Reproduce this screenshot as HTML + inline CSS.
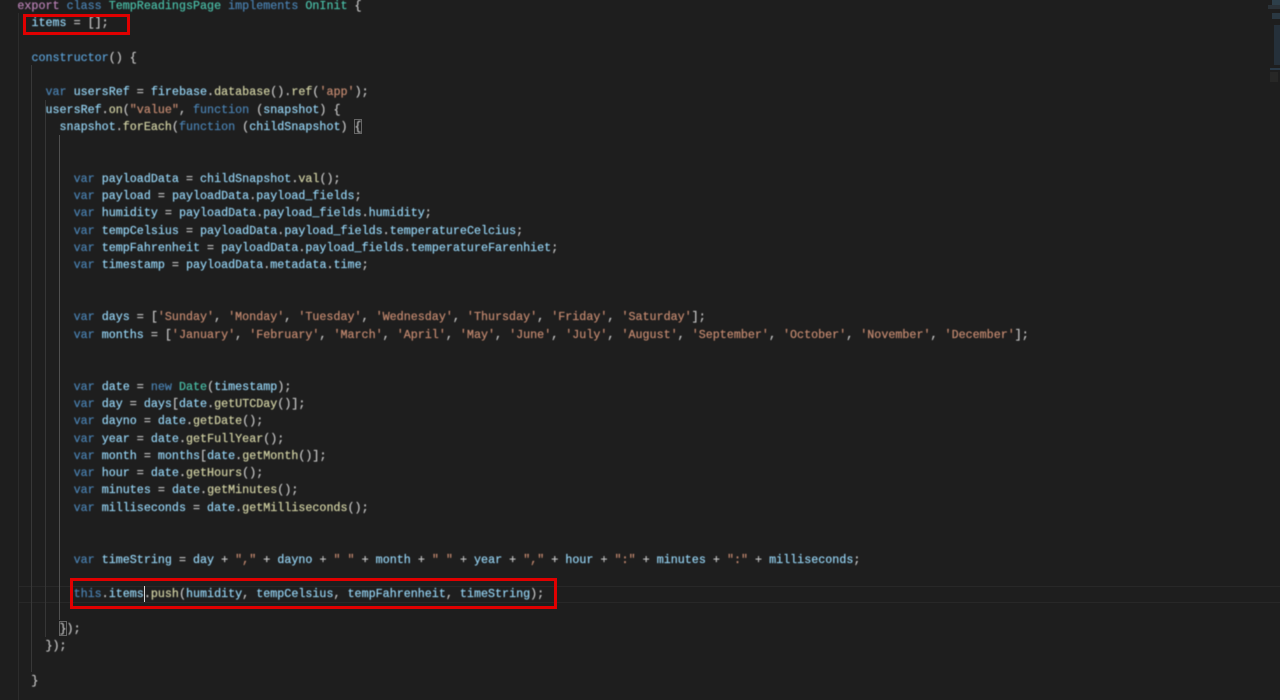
<!DOCTYPE html>
<html>
<head>
<meta charset="utf-8">
<style>
html,body{margin:0;padding:0;background:#1e1e1e;width:1280px;height:700px;overflow:hidden}
#code{position:absolute;left:17.4px;top:-2.3px;margin:0;font-family:"Liberation Mono",monospace;font-size:11.71px;line-height:17.31px;color:#c8c8c8;white-space:pre;filter:blur(.4px);-webkit-text-stroke:.2px}
.k{color:#4a82b2}.v{color:#94d2f2}.f{color:#d2d2a4}.s{color:#c48a70}.c{color:#4abfa8}.e{color:#b880b4}
.g{position:absolute;width:1px}
.r{position:absolute;border:3px solid #e00000;box-sizing:border-box}
.b{position:absolute;border:1px solid #666;box-sizing:border-box;width:8px;height:15px}
.m{position:absolute}
</style>
</head>
<body>
<div style="position:absolute;left:18px;top:586px;width:1262px;height:17px;border-top:1px solid #282828;border-bottom:1px solid #282828;box-sizing:border-box"></div>
<div class="g" style="left:18px;top:13px;height:687px;background:#2c2c2c"></div>
<div class="g" style="left:31px;top:65px;height:607px;background:#383838"></div>
<div class="g" style="left:45px;top:100px;height:537px;background:#363636"></div>
<div class="g" style="left:59px;top:135px;height:485px;background:#505050"></div>
<pre id="code"><span class="e">export</span> <span class="k">class</span> <span class="c">TempReadingsPage</span> <span class="k">implements</span> <span class="c">OnInit</span> {
  <span class="v">items</span> = [];

  <span class="f" style="color:#5a9fd4">constructor</span>() {

    <span class="k">var</span> <span class="v">usersRef</span> = <span class="v">firebase</span>.<span class="f">database</span>().<span class="f">ref</span>(<span class="s">'app'</span>);
    <span class="v">usersRef</span>.<span class="f">on</span>(<span class="s">"value"</span>, <span class="k">function</span> (<span class="v">snapshot</span>) {
      <span class="v">snapshot</span>.<span class="f">forEach</span>(<span class="k">function</span> (<span class="v">childSnapshot</span>) {


        <span class="k">var</span> <span class="v">payloadData</span> = <span class="v">childSnapshot</span>.<span class="f">val</span>();
        <span class="k">var</span> <span class="v">payload</span> = <span class="v">payloadData</span>.<span class="v">payload_fields</span>;
        <span class="k">var</span> <span class="v">humidity</span> = <span class="v">payloadData</span>.<span class="v">payload_fields</span>.<span class="v">humidity</span>;
        <span class="k">var</span> <span class="v">tempCelsius</span> = <span class="v">payloadData</span>.<span class="v">payload_fields</span>.<span class="v">temperatureCelcius</span>;
        <span class="k">var</span> <span class="v">tempFahrenheit</span> = <span class="v">payloadData</span>.<span class="v">payload_fields</span>.<span class="v">temperatureFarenhiet</span>;
        <span class="k">var</span> <span class="v">timestamp</span> = <span class="v">payloadData</span>.<span class="v">metadata</span>.<span class="v">time</span>;


        <span class="k">var</span> <span class="v">days</span> = [<span class="s">'Sunday'</span>, <span class="s">'Monday'</span>, <span class="s">'Tuesday'</span>, <span class="s">'Wednesday'</span>, <span class="s">'Thursday'</span>, <span class="s">'Friday'</span>, <span class="s">'Saturday'</span>];
        <span class="k">var</span> <span class="v">months</span> = [<span class="s">'January'</span>, <span class="s">'February'</span>, <span class="s">'March'</span>, <span class="s">'April'</span>, <span class="s">'May'</span>, <span class="s">'June'</span>, <span class="s">'July'</span>, <span class="s">'August'</span>, <span class="s">'September'</span>, <span class="s">'October'</span>, <span class="s">'November'</span>, <span class="s">'December'</span>];


        <span class="k">var</span> <span class="v">date</span> = <span class="k">new</span> <span class="c">Date</span>(<span class="v">timestamp</span>);
        <span class="k">var</span> <span class="v">day</span> = <span class="v">days</span>[<span class="v">date</span>.<span class="f">getUTCDay</span>()];
        <span class="k">var</span> <span class="v">dayno</span> = <span class="v">date</span>.<span class="f">getDate</span>();
        <span class="k">var</span> <span class="v">year</span> = <span class="v">date</span>.<span class="f">getFullYear</span>();
        <span class="k">var</span> <span class="v">month</span> = <span class="v">months</span>[<span class="v">date</span>.<span class="f">getMonth</span>()];
        <span class="k">var</span> <span class="v">hour</span> = <span class="v">date</span>.<span class="f">getHours</span>();
        <span class="k">var</span> <span class="v">minutes</span> = <span class="v">date</span>.<span class="f">getMinutes</span>();
        <span class="k">var</span> <span class="v">milliseconds</span> = <span class="v">date</span>.<span class="f">getMilliseconds</span>();


        <span class="k">var</span> <span class="v">timeString</span> = <span class="v">day</span> + <span class="s">","</span> + <span class="v">dayno</span> + <span class="s">" "</span> + <span class="v">month</span> + <span class="s">" "</span> + <span class="v">year</span> + <span class="s">","</span> + <span class="v">hour</span> + <span class="s">":"</span> + <span class="v">minutes</span> + <span class="s">":"</span> + <span class="v">milliseconds</span>;

        <span class="k">this</span>.<span class="v">items</span>.<span class="f">push</span>(<span class="v">humidity</span>, <span class="v">tempCelsius</span>, <span class="v">tempFahrenheit</span>, <span class="v">timeString</span>);

      });
    });

  }</pre>
<div class="b" style="left:354px;top:119px"></div>
<div class="b" style="left:59px;top:621px"></div>
<div style="position:absolute;left:144px;top:586px;width:1px;height:16px;background:#d4d4d4"></div>
<div class="r" style="left:23px;top:14px;width:107px;height:21px"></div>
<div class="r" style="left:70px;top:578px;width:487px;height:31px"></div>
<div class="m" style="left:1272px;top:0;width:8px;height:8px;background:#2d3f4a"></div>
<div class="m" style="left:1268px;top:5px;width:12px;height:4px;background:#2a3238"></div>
<div class="m" style="left:1272px;top:13px;width:8px;height:6px;background:#2a3842"></div>
<div class="m" style="left:1274px;top:25px;width:6px;height:40px;background:#25303a"></div>
<div class="m" style="left:1270px;top:68px;width:10px;height:2px;background:#2a3a48"></div>
<div class="m" style="left:1270px;top:72px;width:8px;height:10px;background:#272726"></div>
</body>
</html>
